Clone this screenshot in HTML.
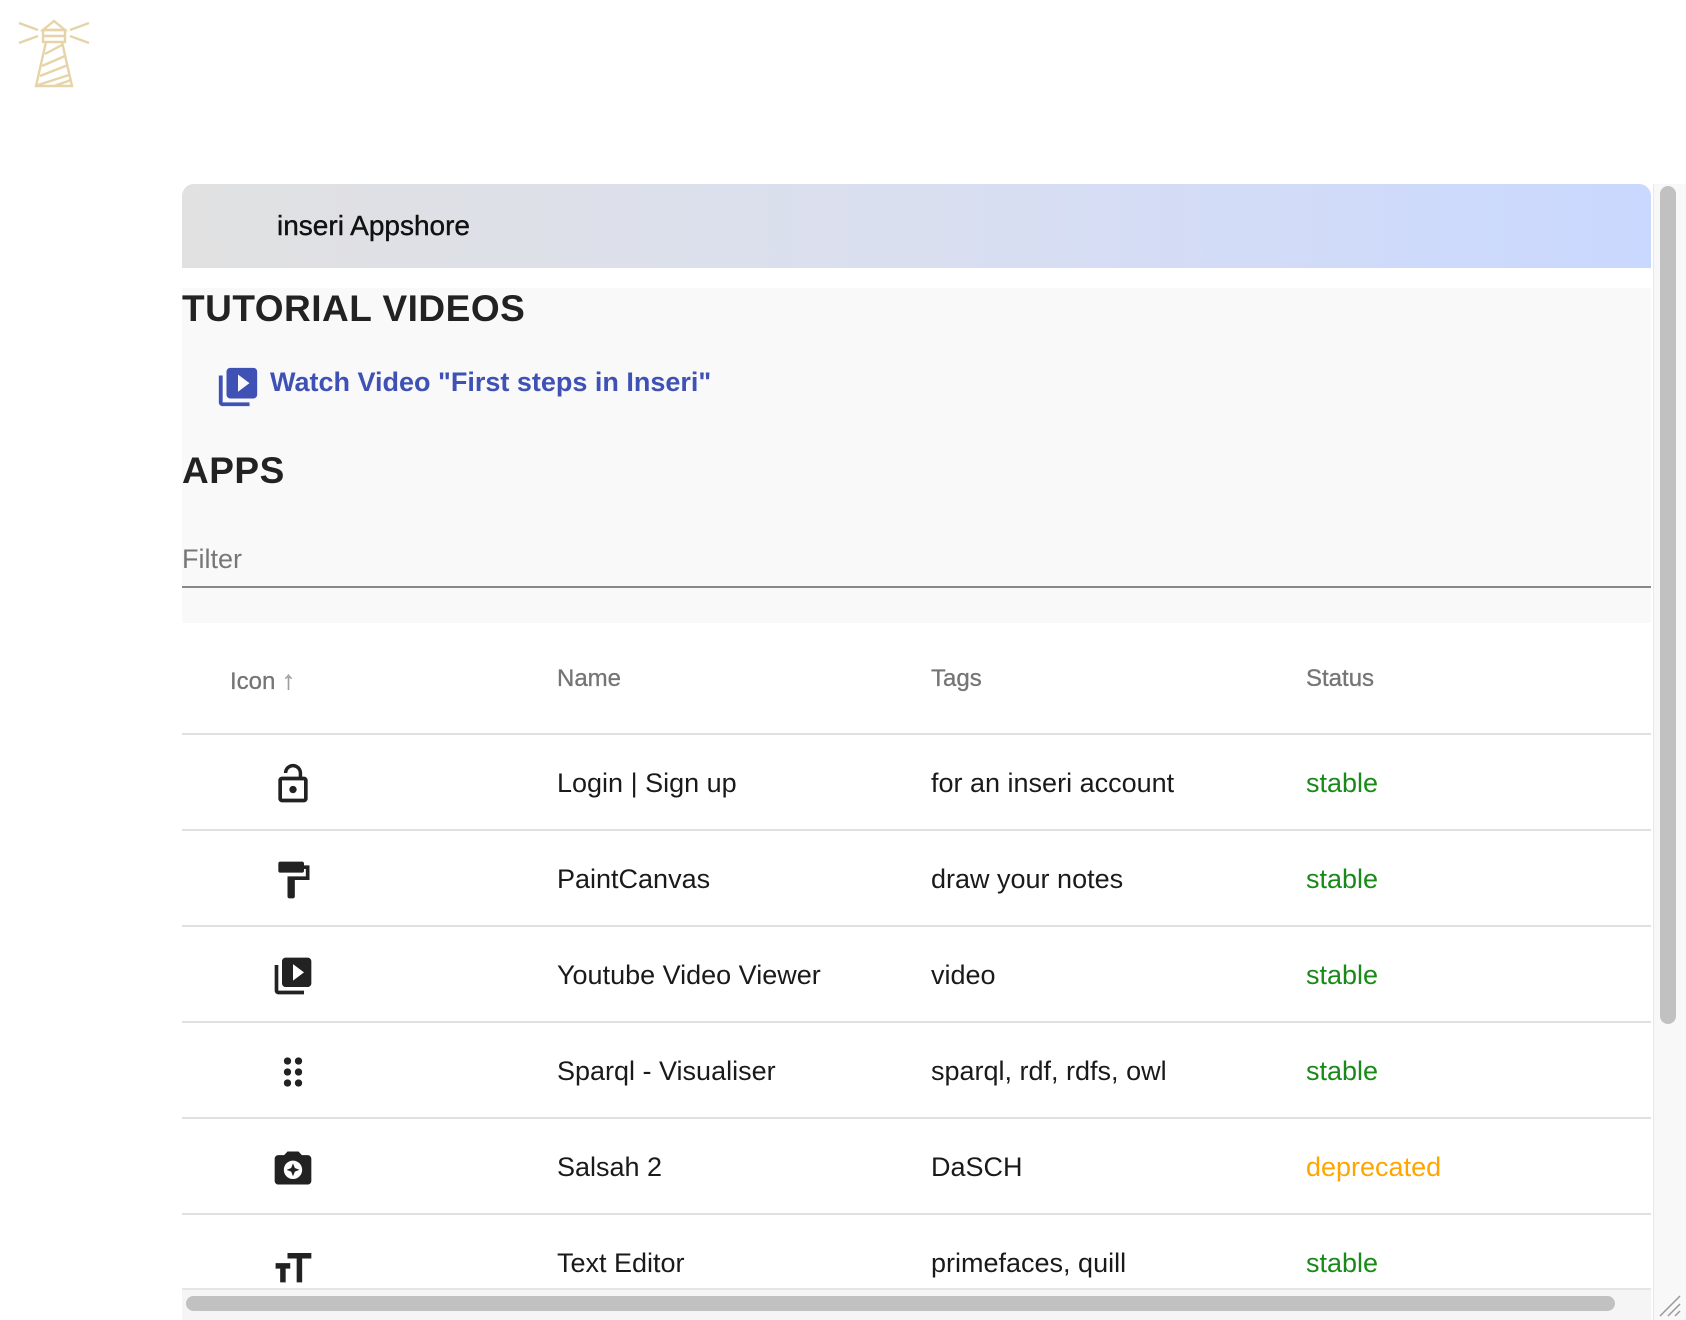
<!DOCTYPE html>
<html><head><meta charset="utf-8">
<style>
*{box-sizing:border-box;margin:0;padding:0}
html,body{width:1686px;height:1320px;overflow:hidden;background:#fff;font-family:"Liberation Sans",Arial,sans-serif}
.abs{position:absolute}
#panel{position:absolute;left:182px;top:184px;width:1469px;height:1136px;overflow:hidden;background:#fff;border-radius:12px 12px 0 0}
#hdr{position:absolute;left:0;top:0;width:100%;height:84px;background:linear-gradient(90deg,#e1e1e1,#dadff0 50%,#c9d8ff);}
#hdr span{position:absolute;left:95px;top:26px;font-size:28px;color:#111;-webkit-text-stroke:0.4px #111}
#gray{position:absolute;left:0;top:104px;width:100%;height:335px;background:#f9f9f9}
h2{position:absolute;left:0;font-size:37px;font-weight:bold;color:#222;letter-spacing:0.5px}
.th{position:absolute;top:481px;font-size:24px;color:#757575;-webkit-text-stroke:0.3px #757575}
.row{position:absolute;left:0;width:100%;height:96px;border-bottom:2px solid #e0e0e0}
.row div{position:absolute;top:33px;font-size:27px;color:#1a1a1a}
.row svg{position:absolute;left:89px;top:27px}
.ok{color:#198a19!important}
.dep{color:#ffa500!important}
</style></head><body>
<svg class="abs" style="left:18px;top:18px" width="72" height="72" viewBox="0 0 72 72" fill="none" stroke="#e6d4a8" stroke-width="2.4">
<path d="M1 5 L20 12 M1 25 L20 18 M71 5 L52 12 M71 25 L52 18"/>
<path d="M25 12 L36 3 L47 12 Z"/>
<rect x="25" y="12" width="22" height="12"/>
<path d="M25 18 H47"/>
<path d="M28 24 L18 68 H54 L44 24"/>
<path d="M27 36 L44 27 M24 48 L47 38 M22 58 L50 47 M20 67 L51 57 M36 68 L53 62"/>
</svg>
<div id="panel">
<div id="hdr"><span>inseri Appshore</span></div>
<div id="gray"></div>
<h2 style="top:104px">TUTORIAL VIDEOS</h2>
<svg class="abs" style="left:33px;top:180px" width="46" height="46" viewBox="0 0 24 24" fill="#3f51b5"><path d="M4 6H2v14c0 1.1.9 2 2 2h14v-2H4V6zm16-4H8c-1.1 0-2 .9-2 2v12c0 1.1.9 2 2 2h12c1.1 0 2-.9 2-2V4c0-1.1-.9-2-2-2zm-8 12.5v-9l6 4.5-6 4.5z"/></svg>
<div class="abs" style="left:88px;top:183px;font-size:27px;font-weight:bold;color:#3f51b5">Watch Video "First steps in Inseri"</div>
<h2 style="top:266px">APPS</h2>
<div class="abs" style="left:0;top:360px;font-size:27px;color:#777">Filter</div>
<div class="abs" style="left:0;top:402px;width:100%;height:2px;background:#888"></div>
<div class="th" style="left:48px">Icon <span style="color:#aaa;font-weight:bold;font-size:26px">&#8593;</span></div>
<div class="th" style="left:375px">Name</div>
<div class="th" style="left:749px">Tags</div>
<div class="th" style="left:1124px">Status</div>
<div class="abs" style="left:0;top:549px;width:100%;height:2px;background:#e0e0e0"></div>
<div class="row" style="top:551px">
<svg width="44" height="44" viewBox="0 0 24 24" fill="#222"><path d="M12 17c1.1 0 2-.9 2-2s-.9-2-2-2-2 .9-2 2 .9 2 2 2zm6-9h-1V6c0-2.76-2.24-5-5-5S7 3.24 7 6h1.9c0-1.71 1.39-3.1 3.1-3.1s3.1 1.39 3.1 3.1v2H6c-1.1 0-2 .9-2 2v10c0 1.1.9 2 2 2h12c1.1 0 2-.9 2-2V10c0-1.1-.9-2-2-2zm0 12H6V10h12v10z"/></svg>
<div style="left:375px">Login | Sign up</div><div style="left:749px">for an inseri account</div><div class="ok" style="left:1124px">stable</div></div>
<div class="row" style="top:647px">
<svg width="44" height="44" viewBox="0 0 24 24" fill="#222"><path d="M18 4V3c0-.55-.45-1-1-1H5c-.55 0-1 .45-1 1v4c0 .55.45 1 1 1h12c.55 0 1-.45 1-1V6h1v4H9v11c0 .55.45 1 1 1h2c.55 0 1-.45 1-1v-9h8V4h-3z"/></svg>
<div style="left:375px">PaintCanvas</div><div style="left:749px">draw your notes</div><div class="ok" style="left:1124px">stable</div></div>
<div class="row" style="top:743px">
<svg width="44" height="44" viewBox="0 0 24 24" fill="#222"><path d="M4 6H2v14c0 1.1.9 2 2 2h14v-2H4V6zm16-4H8c-1.1 0-2 .9-2 2v12c0 1.1.9 2 2 2h12c1.1 0 2-.9 2-2V4c0-1.1-.9-2-2-2zm-8 12.5v-9l6 4.5-6 4.5z"/></svg>
<div style="left:375px">Youtube Video Viewer</div><div style="left:749px">video</div><div class="ok" style="left:1124px">stable</div></div>
<div class="row" style="top:839px">
<svg width="44" height="44" viewBox="0 0 24 24" fill="#222"><circle cx="9" cy="6" r="2"/><circle cx="15" cy="6" r="2"/><circle cx="9" cy="12" r="2"/><circle cx="15" cy="12" r="2"/><circle cx="9" cy="18" r="2"/><circle cx="15" cy="18" r="2"/></svg>
<div style="left:375px">Sparql - Visualiser</div><div style="left:749px">sparql, rdf, rdfs, owl</div><div class="ok" style="left:1124px">stable</div></div>
<div class="row" style="top:935px">
<svg width="44" height="44" viewBox="0 0 24 24" fill="#222"><path d="M20 5h-3.17L15 3H9L7.17 5H4c-1.1 0-2 .9-2 2v12c0 1.1.9 2 2 2h16c1.1 0 2-.9 2-2V7c0-1.1-.9-2-2-2zm-8 13c-2.76 0-5-2.24-5-5s2.24-5 5-5 5 2.24 5 5-2.24 5-5 5z"/><path d="M12 9.5l1 2.5 2.5 1-2.5 1-1 2.5-1-2.5-2.5-1 2.5-1z"/></svg>
<div style="left:375px">Salsah 2</div><div style="left:749px">DaSCH</div><div class="dep" style="left:1124px">deprecated</div></div>
<div class="row" style="top:1031px;border-bottom:none">
<svg width="44" height="44" viewBox="0 0 24 24" fill="#222"><path d="M2.5 11.5h8v3H8V22H5v-7.5H2.5zM9 6v3h5v13h3V9h5V6z"/></svg>
<div style="left:375px">Text Editor</div><div style="left:749px">primefaces, quill</div><div class="ok" style="left:1124px">stable</div></div>
<div class="abs" style="left:0;top:1104px;width:100%;height:32px;background:#f5f5f5;border-top:2px solid #e6e6e6"></div>
<div class="abs" style="left:4px;top:1112px;width:1429px;height:15px;border-radius:8px;background:#c1c1c1"></div>
</div>
<div class="abs" style="left:1653px;top:184px;width:33px;height:1136px;background:#f8f8f8;border-left:1px solid #e8e8e8"></div>
<div class="abs" style="left:1660px;top:186px;width:16px;height:838px;border-radius:8px;background:#c1c1c1"></div>
<svg class="abs" style="left:1656px;top:1292px" width="28" height="26" stroke="#999" stroke-width="1.5"><path d="M4 24L24 4M12 24L24 12M19 24L24 19"/></svg>
</body></html>
